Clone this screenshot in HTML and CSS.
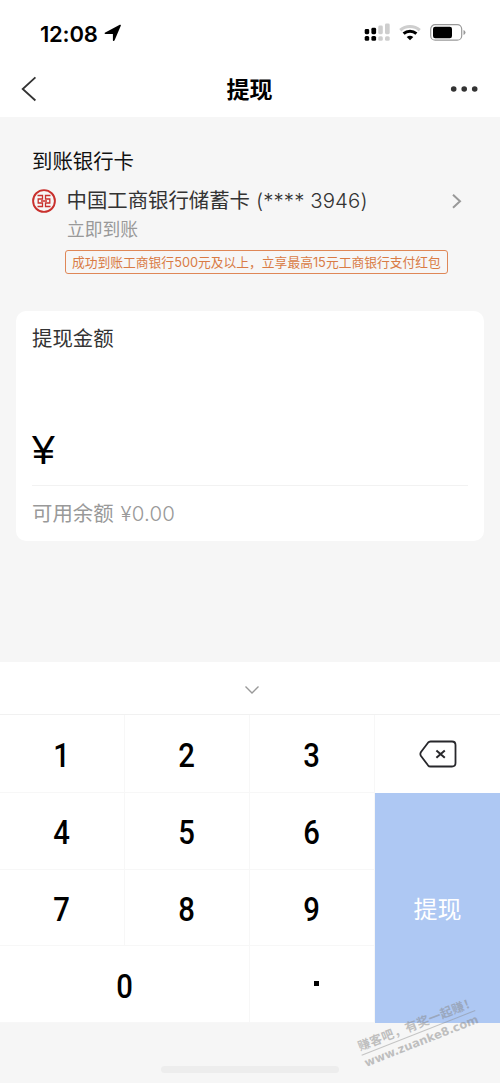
FILE: index.html
```html
<!DOCTYPE html>
<html lang="zh-CN">
<head>
<meta charset="utf-8">
<title>提现</title>
<link rel="stylesheet" href="styles.css">
</head>
<body>
<div class="screen">
  <header class="header">
    <div class="status">
      <span class="time">12:08</span>
      <svg class="location" width="18" height="18" viewBox="0 0 18 18"><path d="M.8 8.700 15.800.8q1.400-.5 1 .9L10.600 16.300q-.7 1.300-1.700.2V10.100H1.300q-1.300-.5-.5-1.400z"/></svg>
      <svg class="indicators" width="104" height="20" viewBox="0 0 104 20">
        <g fill="#000"><rect x=".7" y="6" width="4.500" height="5.200" rx="1.400"/><rect x="7.400" y="4.800" width="4.700" height="6.400" rx="1.400"/><rect x=".7" y="13" width="4.500" height="4.800" rx="1.500"/><rect x="7.400" y="13" width="4.700" height="4.800" rx="1.500"/></g>
        <g fill="#cecece"><rect x="14.300" y="2.500" width="4.500" height="8.700" rx="1.400"/><rect x="21" y=".5" width="4.700" height="10.700" rx="1.400"/><rect x="14.300" y="13.200" width="4.500" height="4.500" rx="1.500"/><rect x="21" y="13.200" width="4.700" height="4.500" rx="1.500"/></g>
        <path d="M36.300 7.200a14.500 14.500 0 0 1 19.400 0" fill="none" stroke="#cecece" stroke-width="3.200"/>
        <path d="M39.600 10.700a9.700 9.700 0 0 1 12.800 0" fill="none" stroke="#000" stroke-width="3"/>
        <path d="M42.700 14q3.300-2.400 6.600 0L46 17.300z"/>
        <rect x="66.700" y="1.700" width="31" height="15.500" rx="4.500" fill="#fff" stroke="#999" stroke-width="1.200"/>
        <rect x="69" y="3.700" width="19" height="11.500" rx="2.200"/>
        <path d="M99.500 7q2 .8 2 2.500t-2 2.500z" fill="#999"/>
      </svg>
    </div>
    <div class="nav">
      <svg width="16" height="26" viewBox="0 0 16 26"><path d="M14.400 1.300 1.700 13l12.700 11.500" fill="none" stroke="#333" stroke-width="1.800"/></svg>
      <h1 class="title">提现</h1>
      <svg width="28" height="8" viewBox="0 0 28 8" fill="#333"><circle cx="3.700" cy="4" r="2.800"/><circle cx="14.200" cy="4" r="2.800"/><circle cx="24.700" cy="4" r="2.800"/></svg>
    </div>
  </header>

  <main class="content">
    <section class="account">
      <h2 class="account-title">到账银行卡</h2>
      <div class="bank">
        <svg class="logo" width="24" height="24" viewBox="0 0 24 24" fill="none" stroke="#c9302d">
          <circle cx="12" cy="12" r="10.900" stroke-width="1.900"/>
          <path d="M5.500 6.500h5v3.500H6.200v2M5.500 17.500h5v-3.500H6.200v-2M18.500 6.500h-5v3.500h4.300v2M18.500 17.500h-5v-3.500h4.300v-2M9 12h6" stroke-width="1.300"/>
        </svg>
        <span class="bank-name">中国工商银行储蓄卡<span class="bank-number">(**** 3946)</span></span>
        <svg class="more" width="12" height="16" viewBox="0 0 12 16"><path d="m2 1.700 7 6.500-7 6.500" fill="none" stroke="#999" stroke-width="2"/></svg>
      </div>
      <p class="arrival">立即到账</p>
      <p class="promo">成功到账工商银行<span class="num">500</span>元及以上，立享最高<span class="num">15</span>元工商银行支付红包</p>
    </section>

    <section class="card">
      <h2 class="card-title">提现金额</h2>
      <div class="amount">¥</div>
      <p class="balance">可用余额<span class="balance-value">¥0.00</span></p>
    </section>
  </main>

  <section class="keyboard">
    <div class="collapse"><svg width="16" height="10" viewBox="0 0 16 10"><path d="m1.500 1.500 6.500 6.400 6.500-6.400" fill="none" stroke="#999" stroke-width="1.400"/></svg></div>
    <div class="keys">
      <div class="key"><span class="digit">1</span></div><div class="key"><span class="digit">2</span></div><div class="key"><span class="digit">3</span></div>
      <div class="key erase"><svg width="38" height="28" viewBox="0 0 38 28" fill="none" stroke="#27272b"><path d="M11.500 1.500H33q3.500 0 3.500 3.500v18q0 3.500-3.500 3.500H11.500q-1.500 0-2.500-1.200L2 16q-1.300-2 0-4L9 2.700q1-1.200 2.500-1.200z" stroke-width="1.800"/><path d="m17.400 10.600 8.400 7.200m0-7.200-8.400 7.200" stroke-width="2"/></svg></div>
      <div class="key"><span class="digit">4</span></div><div class="key"><span class="digit">5</span></div><div class="key"><span class="digit">6</span></div>
      <div class="submit">提现</div>
      <div class="key"><span class="digit">7</span></div><div class="key"><span class="digit">8</span></div><div class="key"><span class="digit">9</span></div>
      <div class="key zero"><span class="digit">0</span></div><div class="key"><i class="point"></i></div>
    </div>
  </section>
  <footer class="footer"><div class="home"></div></footer>
  <div class="watermark"><div class="slogan">赚客吧，有奖一起赚！</div><div class="site">www.zuanke8.com</div></div>
</div>
</body>
</html>
```
FILE: styles.css
```css
* { box-sizing: border-box; margin: 0; padding: 0; }
body { background: #f6f6f6; font-family: "Liberation Sans", "Noto Sans CJK SC", sans-serif; color: #333; }
.screen { position: relative; width: 500px; height: 1083px; overflow: hidden; display: flex; flex-direction: column; }
svg { display: block; flex: none; }
h1, h2 { font-weight: 400; }

.header { height: 117px; background: #fff; }
.status { height: 60px; padding: 7px 32px 0 40px; display: flex; align-items: center; }
.time { font: 600 22px/26px Inter, sans-serif; color: #000; width: 64px; letter-spacing: -.2px; white-space: nowrap; }
.location { margin-top: -1px; }
.indicators { margin-left: auto; margin-top: -1px; }
.nav { height: 57px; padding: 0 22px 0 21px; display: flex; align-items: center; justify-content: space-between; }
.title { font: 700 23px/34px "Noto Sans CJK SC", sans-serif; color: #000; margin: -2px 0 0 12px; }

.content { height: 545px; padding: 30px 16px 0; }
.account { height: 164px; padding: 0 16px; }
.account-title { font-size: 20.4px; line-height: 30px; color: #111; }
.bank { display: flex; align-items: center; height: 30px; margin-top: 9px; }
.bank-name { font-size: 20.4px; line-height: 30px; margin-left: 10.500px; white-space: nowrap; }
.bank-number { font-family: Inter, sans-serif; font-weight: 300; margin-left: 6px; letter-spacing: .1px; }
.more { margin-left: auto; margin-right: 5.500px; }
.arrival { font-size: 17.8px; line-height: 26px; color: #999; margin: 1px 0 7px 35px; }
.promo { width: 383px; height: 24px; margin-left: 33px; border: 1.300px solid #df8757; border-radius: 3px; padding-left: 6px; font-size: 12.780px; line-height: 23px; color: #d97b45; white-space: nowrap; }
.num { font-family: Inter, sans-serif; }

.card { height: 230px; background: #fff; border-radius: 10px; padding: 13px 16px 0; }
.card-title { font-size: 20.400px; line-height: 30px; }
.amount { height: 132px; padding-top: 73px; border-bottom: 1px solid #f2f2f2; font-size: 41px; line-height: 46px; color: #000; }
.balance { font-size: 20.400px; line-height: 30px; color: #999; margin-top: 13px; }
.balance-value { font-family: Inter, sans-serif; font-weight: 300; margin-left: 7px; letter-spacing: .2px; }

.keyboard { height: 361px; background: #fff; }
.collapse { height: 53px; padding: 3px 0 0 4px; display: flex; align-items: center; justify-content: center; border-bottom: 1px solid #f1f1f1; }
.keys { display: grid; grid-template-columns: 124.500px 125px 125.500px 125px; grid-template-rows: 78px 76.500px 76.500px 77px; }
.key { display: flex; align-items: center; justify-content: center; padding-top: 3px; border-right: 1px solid #f7f7f7; border-bottom: 1px solid #f7f7f7; font: 500 34px/40px Roboto, sans-serif; color: #000; }
.digit { transform: scaleX(.86); }
.erase { border: 0; padding-top: 0; }
.submit { grid-column: 4; grid-row: 2 / span 3; background: #aec8f3; color: #fff; font-size: 24px; display: flex; align-items: center; justify-content: center; padding-bottom: 2px; }
.zero { grid-column: span 2; }
.point { width: 5px; height: 5px; background: #000; margin: -5px 0 0 9px; }
.footer { flex: 1; display: flex; justify-content: center; padding-top: 43px; }
.home { width: 178px; height: 7px; border-radius: 4px; background: #ededed; }

.watermark { position: absolute; left: 357px; top: 1014px; width: 130px; transform: rotate(-21.500deg); color: rgba(135, 135, 135, .5); font-weight: 700; white-space: nowrap; }
.slogan { font: 700 12.300px/17px "Noto Sans CJK SC", sans-serif; letter-spacing: .3px; width: 122px; border-bottom: 1px solid rgba(135, 135, 135, .45); }
.site { font: 700 11.600px/16px "DejaVu Sans", sans-serif; }
```
